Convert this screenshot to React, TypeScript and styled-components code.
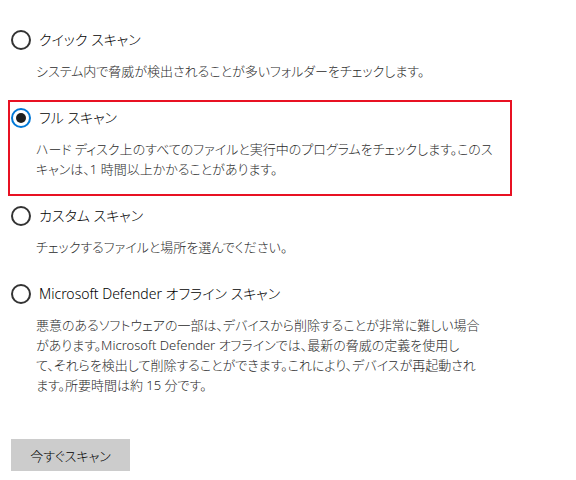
import styled, { createGlobalStyle } from "styled-components";

interface ScanOption {
  id: string;
  title: string;
  lines: string[];
}

const options: ScanOption[] = [
  {
    id: "quick",
    title: "クイック スキャン",
    lines: ["システム内で脅威が検出されることが多いフォルダーをチェックします。"],
  },
  {
    id: "full",
    title: "フル スキャン",
    lines: [
      "ハード ディスク上のすべてのファイルと実行中のプログラムをチェックします。このス",
      "キャンは、1 時間以上かかることがあります。",
    ],
  },
  {
    id: "custom",
    title: "カスタム スキャン",
    lines: ["チェックするファイルと場所を選んでください。"],
  },
  {
    id: "offline",
    title: "Microsoft Defender オフライン スキャン",
    lines: [
      "悪意のあるソフトウェアの一部は、デバイスから削除することが非常に難しい場合",
      "があります。Microsoft Defender オフラインでは、最新の脅威の定義を使用し",
      "て、それらを検出して削除することができます。これにより、デバイスが再起動され",
      "ます。所要時間は約 15 分です。",
    ],
  },
];

const GlobalStyle = createGlobalStyle`
  body {
    margin: 0;
    background: #ffffff;
    font-family: "Noto Sans", "Noto Sans CJK JP", sans-serif;
    font-feature-settings: "palt";
    font-weight: 300;
    color: #000000;
  }
`;

const App = () => {
  const selected = "full";
  return (
    <>
      <GlobalStyle />
      <Page>
        {options.map((option) => (
          <OptionBlock key={option.id} focused={option.id === selected}>
            <OptionHeader>
              <Radio checked={option.id === selected} />
              <OptionTitle>{option.title}</OptionTitle>
            </OptionHeader>
            <Description>
              {option.lines.map((line) => (
                <div key={line}>{line}</div>
              ))}
            </Description>
          </OptionBlock>
        ))}
        <ScanButton>今すぐスキャン</ScanButton>
      </Page>
    </>
  );
};

const Page = styled.div`
  display: flex;
  flex-direction: column;
  align-items: flex-start;
  gap: 2px;
  padding: 22px 0 0 8px;
`;

const OptionBlock = styled.div<{ focused: boolean }>`
  box-sizing: border-box;
  width: 504px;
  padding: 6px 0 15px 1px;
  border: 2px solid ${({ focused }) => (focused ? "#e81123" : "transparent")};
`;

const OptionHeader = styled.div`
  display: flex;
  align-items: center;
  gap: 8px;
  height: 20px;
`;

const Radio = styled.span<{ checked: boolean }>`
  box-sizing: border-box;
  width: 20px;
  height: 20px;
  border-radius: 50%;
  border: 2px solid ${({ checked }) => (checked ? "#0078d7" : "#333333")};
  display: flex;
  align-items: center;
  justify-content: center;
  flex-shrink: 0;

  &::after {
    content: "";
    width: 10px;
    height: 10px;
    border-radius: 50%;
    background: #1f1f1f;
    display: ${({ checked }) => (checked ? "block" : "none")};
  }
`;

const OptionTitle = styled.span`
  font-size: 14px;
  line-height: 20px;
  color: #000000;
  white-space: nowrap;
`;

const Description = styled.div`
  margin: 11px 0 0 25px;
  font-size: 13px;
  line-height: 20px;
  color: #2b2b2b;
  white-space: nowrap;
`;

const ScanButton = styled.button`
  margin: 25px 0 0 3px;
  width: 119px;
  height: 32px;
  border: none;
  background: #cccccc;
  font-family: inherit;
  font-weight: inherit;
  font-feature-settings: inherit;
  font-size: 13px;
  color: #000000;
  padding: 0;
`;

export default App;
